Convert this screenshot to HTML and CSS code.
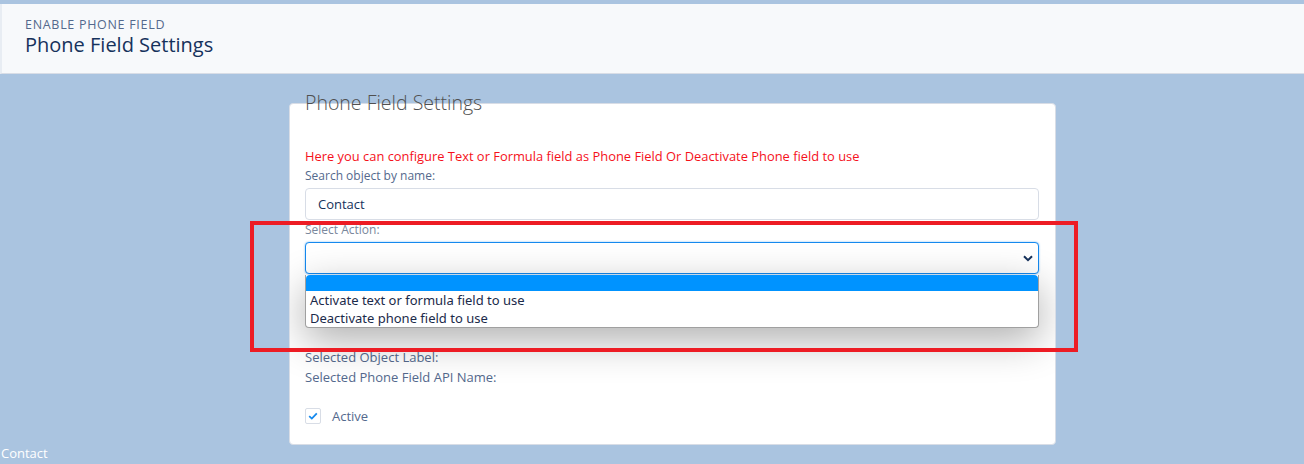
FILE: index.html
```html
<!DOCTYPE html>
<html lang="en">
<head>
  <meta charset="UTF-8">
  <title>Phone Field Settings</title>
  <link rel="stylesheet" href="styles.css">
</head>
<body>

  <div class="page-header">
    <p class="page-header__label">Enable Phone Field</p>
    <h1 class="page-header__title">Phone Field Settings</h1>
  </div>

  <div class="container">
    <div class="card">
      <h2 class="card__title">Phone Field Settings</h2>

      <div class="card__body">
        <p class="notice">Here you can configure Text or Formula field as Phone Field Or Deactivate Phone field to use</p>

        <label class="field-label" for="objectName">Search object by name:</label>
        <input class="input" type="text" id="objectName" value="Contact">

        <label class="field-label field-label--muted" for="action">Select Action:</label>
        <div class="select-wrap">
          <div class="select" id="action">
            <svg class="select__chevron" width="10" height="7" viewBox="0 0 10 7">
              <path d="M1 1.2 L5 5.2 L9 1.2" fill="none" stroke="#16325c" stroke-width="2"/>
            </svg>
          </div>
          <ul class="dropdown">
            <li class="dropdown__option dropdown__option--active"></li>
            <li class="dropdown__option">Activate text or formula field to use</li>
            <li class="dropdown__option">Deactivate phone field to use</li>
          </ul>
        </div>

        <div class="summary">
          <p>Selected Object Label:</p>
          <p>Selected Phone Field API Name:</p>
        </div>

        <label class="checkbox">
          <span class="checkbox__box">
            <svg width="10" height="8" viewBox="0 0 10 8">
              <path d="M1.2 4.2 L3.8 6.6 L8.8 1.4" fill="none" stroke="#1589ee" stroke-width="1.8"/>
            </svg>
          </span>
          <span>Active</span>
        </label>
      </div>

      <div class="highlight"></div>
    </div>
  </div>

  <p class="footer-text">Contact</p>

</body>
</html>
```

FILE: styles.css
```css
:root {
  --page-bg: #aac4e0;
  --header-bg: #f7f9fb;
  --border: #d8dde6;
  --text-weak: #54698d;
  --text-strong: #16325c;
  --focus: #1589ee;
}

* {
  box-sizing: border-box;
}

body {
  font-family: 'Open Sans', 'Lato', sans-serif;
  margin: 0;
  padding-top: 4px;
  height: 464px;
  overflow: hidden;
  background: var(--page-bg);
  color: var(--text-strong);
}

p {
  margin: 0;
}

.page-header {
  height: 70px;
  background: var(--header-bg);
  border-left: 2px solid #e8edf3;
  border-bottom: 1px solid var(--border);
  padding: 13px 0 0 23px;
}

.page-header__label {
  font-size: 12.5px;
  line-height: 15px;
  letter-spacing: 0.7px;
  text-transform: uppercase;
  color: var(--text-weak);
}

.page-header__title {
  margin: 0;
  font-size: 20px;
  line-height: 26px;
  font-weight: 400;
  color: var(--text-strong);
}

.container {
  padding-top: 29px;
  padding-left: 289px;
}

.card {
  position: relative;
  width: 767px;
  height: 342px;
  background: #fff;
  border: 1px solid var(--border);
  border-radius: 4px;
}

.card__title {
  position: relative;
  z-index: 2;
  margin: -13px 0 0 15px;
  font-size: 19.5px;
  line-height: 24px;
  font-weight: 300;
  color: #505050;
}

.card__body {
  height: 326px;
  overflow: hidden;
  padding: 33px 15px 0;
  border-radius: 0 0 4px 4px;
}

.notice {
  font-size: 12.9px;
  line-height: 16px;
  color: #f5111b;
}

.field-label {
  display: block;
  margin-top: 4px;
  font-size: 12px;
  line-height: 16px;
  color: var(--text-weak);
}

.field-label--muted {
  margin-top: 2px;
  color: #7a879c;
}

.input {
  display: block;
  width: 734px;
  height: 32px;
  margin-top: 4px;
  padding: 0 12px;
  border: 1px solid var(--border);
  border-radius: 4px;
  font-family: inherit;
  font-size: 13px;
  color: var(--text-strong);
}

.select-wrap {
  position: relative;
  margin-top: 4px;
  width: 734px;
}

.select {
  position: relative;
  height: 32px;
  border: 1px solid var(--focus);
  border-radius: 4px;
  background: #fff;
  box-shadow: 0 0 2px rgba(21, 137, 238, 0.6);
}

.select__chevron {
  position: absolute;
  right: 5px;
  top: 12px;
}

.dropdown {
  position: absolute;
  z-index: 3;
  top: 33px;
  left: 0;
  width: 734px;
  margin: 0;
  padding: 0;
  list-style: none;
  background: #fff;
  border: 1px solid #a0a0a0;
  border-top: none;
  border-radius: 0 0 4px 4px;
  box-shadow: 0 12px 40px rgba(0, 0, 0, 0.32);
  font-family: 'Noto Sans', 'Open Sans', sans-serif;
  font-size: 13px;
  color: #1b2a4a;
}

.dropdown__option {
  height: 18px;
  line-height: 19px;
  padding-left: 4px;
}

.dropdown__option--active {
  height: 16px;
  background: #0093ff;
  border-radius: 4px 4px 0 0;
}

.summary {
  margin-top: 73px;
  font-size: 13px;
  line-height: 20px;
  color: var(--text-weak);
}

.checkbox {
  display: flex;
  align-items: center;
  gap: 11px;
  margin-top: 20px;
  font-size: 13px;
  color: var(--text-weak);
}

.checkbox__box {
  display: flex;
  align-items: center;
  justify-content: center;
  width: 16px;
  height: 16px;
  border: 1px solid var(--border);
  border-radius: 2px;
  background: #fff;
}

/* red annotation frame drawn over the action picker */
.highlight {
  position: absolute;
  z-index: 4;
  left: -40px;
  top: 117px;
  width: 828px;
  height: 131px;
  border: 4px solid #ed1c24;
  pointer-events: none;
}

.footer-text {
  margin: 0 0 0 1px;
  font-size: 13px;
  line-height: 17px;
  color: #fff;
}
```
